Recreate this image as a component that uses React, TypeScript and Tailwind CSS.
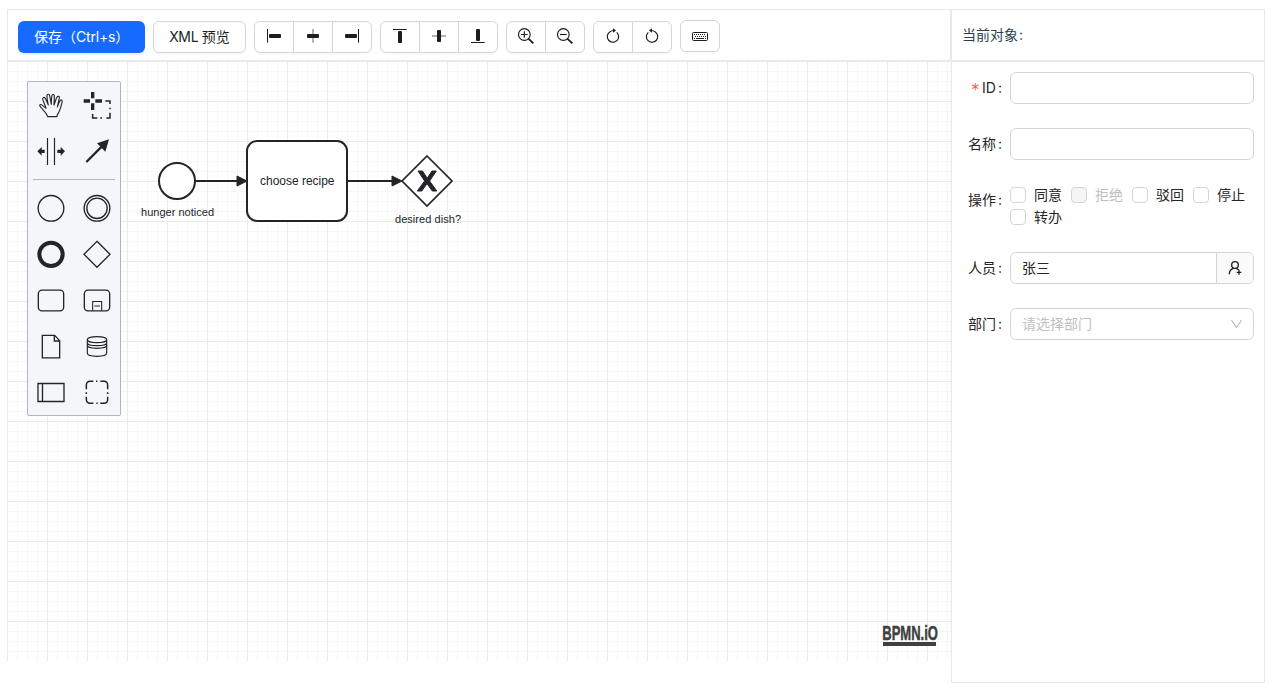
import React from "react";

const INK = "#22242a";

/* Drawings inside toolbar buttons use a grid of three units per pixel. */
function ToolButton({ children, title, className = "" }: { children: React.ReactNode; title: string; className?: string }) {
  return (
    <button aria-label={title} className={`h-8 w-10 shrink-0 border border-[#d5d5d5] bg-white shadow-[0_2px_0_rgba(0,0,0,0.02)] ${className}`}>
      <svg viewBox="0 0 120 96" className="-m-px block h-8 w-10" fill="none" stroke="#1d1d1f" strokeWidth="3">
        {children}
      </svg>
    </button>
  );
}

function Bar({ x, y, w, h }: { x: number; y: number; w: number; h: number }) {
  return <rect x={x} y={y} width={w} height={h} rx="3" fill="#1d1d1f" stroke="none" />;
}

function Toolbar() {
  return (
    <div className="flex h-[52px] items-start gap-2 border border-[#e8e8e8] pt-[11px] pl-[10px]">
      <button className="h-8 w-[127px] shrink-0 rounded-md bg-[#176aff] pl-[1px] text-left text-sm leading-8 whitespace-nowrap text-white shadow-[0_2px_0_rgba(5,145,255,0.1)]">
        <span className="pl-[15px]">保存（</span>
        <span className="tracking-[-0.2px]">Ctrl+s</span>
        <span>）</span>
      </button>
      <button className="h-8 w-[93px] shrink-0 rounded-md border border-[#d5d5d5] bg-white text-sm leading-[30px] whitespace-nowrap text-[#1f1f1f] shadow-[0_2px_0_rgba(0,0,0,0.02)]">
        <span className="tracking-[-0.35px]">XML </span>预览
      </button>
      <div className="flex">
        <ToolButton title="左对齐" className="rounded-l-md">
          <path d="M40.5 24V65" />
          <Bar x={45} y={39} w={36} h={12} />
        </ToolButton>
        <ToolButton title="水平居中" className="-ml-px">
          <path d="M60 24V65" stroke="#666" />
          <Bar x={42} y={39} w={36} h={12} />
        </ToolButton>
        <ToolButton title="右对齐" className="-ml-px rounded-r-md">
          <path d="M79.5 24V65" />
          <Bar x={39} y={39} w={36} h={12} />
        </ToolButton>
      </div>
      <div className="flex">
        <ToolButton title="顶部对齐" className="rounded-l-md">
          <path d="M39 25.5H80" />
          <Bar x={54} y={30} w={12} h={36} />
        </ToolButton>
        <ToolButton title="垂直居中" className="-ml-px">
          <path d="M39 45H81" stroke="#666" />
          <Bar x={54} y={27} w={12} h={36} />
        </ToolButton>
        <ToolButton title="底部对齐" className="-ml-px rounded-r-md">
          <path d="M39 64.5H80" />
          <Bar x={54} y={24} w={12} h={36} />
        </ToolButton>
      </div>
      <div className="flex">
        <ToolButton title="放大" className="rounded-l-md">
          <circle cx="55" cy="40.5" r="17.5" strokeWidth="3.5" />
          <path d="M45 40.5H65M55 30.5V50.5" strokeWidth="3.5" />
          <path d="M67 53L82 67" strokeWidth="5.5" />
        </ToolButton>
        <ToolButton title="缩小" className="-ml-px rounded-r-md">
          <circle cx="55" cy="40.5" r="17.5" strokeWidth="3.5" />
          <path d="M45 40.5H65" strokeWidth="3.5" />
          <path d="M67 53L82 67" strokeWidth="5.5" />
        </ToolButton>
      </div>
      <div className="flex">
        <ToolButton title="重做" className="rounded-l-md">
          <path d="M71 34A17 17 0 1 1 50 33Q56 28.500 62 28.500" strokeWidth="3.6" />
          <path d="M60 22L69 28.500L60 35Z" fill="#1d1d1f" stroke="none" />
        </ToolButton>
        <ToolButton title="撤销" className="-ml-px rounded-r-md">
          <path d="M49 34A17 17 0 1 0 70 33Q64 28.500 58 28.500" strokeWidth="3.6" />
          <path d="M60 22L51 28.500L60 35Z" fill="#1d1d1f" stroke="none" />
        </ToolButton>
      </div>
      <ToolButton title="快捷键" className="-mt-px rounded-md">
        <rect x="37.5" y="37.5" width="45" height="24" rx="3" />
        <path d="M42 43.5H78M45 49.5H78" strokeDasharray="3 3" />
        <path d="M42 55.5H45M48 55.5H72M75 55.5H78" />
      </ToolButton>
    </div>
  );
}

/* Palette glyphs: 138 units across a 46px cell. */
function Glyph({ children }: { children: React.ReactNode }) {
  return (
    <svg viewBox="0 0 138 138" className="block h-[46px] w-[46px]" fill="none" stroke={INK} strokeWidth="4">
      {children}
    </svg>
  );
}

function Palette() {
  return (
    <div className="absolute top-5 left-5 w-[94px] rounded-[2px] border border-[#b0b4c0] bg-[#f4f6f9]">
      <div className="grid grid-cols-2">
        <Glyph>
          <path
            strokeWidth="3.4"
            strokeLinejoin="round"
            d="M59 104C57 96 50 89 44 82C40 77 35 74 35 70C36 66 41 67 44 71L54 79C51 69 45 57 44 51C44 46 49 44 52 49L61 69C59 58 56 46 57 40C58 35 64 36 65 41L70 67C70 57 70 47 72 40C74 36 79 37 79 42L78 69C81 61 83 52 87 45C90 41 95 43 94 48L88 75C91 69 93 59 97 55C101 52 104 56 102 61C99 74 96 88 88 98L87 104Z"
          />
        </Glyph>
        <Glyph>
          <path strokeWidth="10" d="M56 30V49M56 64V84M29 57H48M64 57H84" />
          <path strokeWidth="4.5" d="M94 57H108V66M108 77V82M108 92V108H97M84 108H79M70 108H56V96" />
        </Glyph>
        <Glyph>
          <path d="M58.500 30V111M79.500 30V111" strokeWidth="3.5" />
          <path d="M28 70L41 57V65H50V75H41V83ZM111 70L98 57V65H88V75H98V83Z" fill={INK} stroke="none" />
        </Glyph>
        <Glyph>
          <path d="M37 102L86 53" strokeWidth="7" />
          <path d="M105 34L94 71L69 46Z" fill={INK} stroke="none" />
        </Glyph>
      </div>
      <div className="mx-[5px] my-[5px] h-px bg-[#b0b4c0]" />
      <div className="grid grid-cols-2">
        <Glyph>
          <circle cx="69" cy="70" r="38.5" />
        </Glyph>
        <Glyph>
          <circle cx="69" cy="70" r="38.5" />
          <circle cx="69" cy="70" r="30.5" />
        </Glyph>
        <Glyph>
          <circle cx="69" cy="70" r="35" strokeWidth="12" />
        </Glyph>
        <Glyph>
          <path d="M69 31L108 70L69 109L30 70Z" />
        </Glyph>
        <Glyph>
          <rect x="31" y="39.500" width="76" height="62" rx="11" />
        </Glyph>
        <Glyph>
          <rect x="31" y="39.500" width="76" height="62" rx="11" />
          <path strokeWidth="3.2" d="M56 101V73.500H83V101M61 87H78" />
        </Glyph>
        <Glyph>
          <path d="M43 37H80L95 53V104.500H43ZM79 37V54H95" />
        </Glyph>
        <Glyph>
          <ellipse cx="69" cy="50" rx="29" ry="9" strokeWidth="3.5" />
          <path strokeWidth="3.5" d="M40 50V91C40 103 98 103 98 91V50M40 59C40 71 98 71 98 59M40 67C40 79 98 79 98 67" />
        </Glyph>
        <Glyph>
          <path d="M30 43.500H108V97.500H30ZM43.500 43V97" />
        </Glyph>
        <Glyph>
          <path
            strokeWidth="4.5"
            d="M37 61V49Q37 37 49 37H58M66 37H70M79 37H90Q101 37 101 49V61M101 70V75M101 83V91Q101 103 90 103H79M71 103H67M58 103H49Q37 103 37 91V83M37 75V70"
          />
        </Glyph>
      </div>
    </div>
  );
}

function Diagram() {
  return (
    <svg viewBox="7 61 944 600" className="absolute inset-0 h-full w-full" fill="none" stroke={INK} strokeWidth="2">
      <defs>
        <pattern id="grid" x="7" y="61" width="40" height="40" patternUnits="userSpaceOnUse">
          <path d="M10.500 0V40M20.500 0V40M30.500 0V40M0 10.500H40M0 20.500H40M0 30.500H40" stroke="#f7f7f7" strokeWidth="1" />
          <path d="M0.500 0V40M0 0.500H40" stroke="#ebebeb" strokeWidth="1" />
        </pattern>
      </defs>
      <rect x="7" y="61" width="944" height="600" fill="url(#grid)" stroke="none" />
      <path d="M195 181H238M347 181H393" />
      <path d="M237 176L247 181L237 186ZM392 176L402 181L392 186Z" fill={INK} strokeWidth="1" />
      <circle cx="177" cy="181" r="18" fill="#fff" />
      <rect x="247" y="141" width="100" height="80" rx="10" fill="#fff" />
      <path d="M427 156L452 181L427 206L402 181Z" fill="#fff" strokeWidth="1.7" />
      <path d="M418 171H422.500L427.200 178.200L432 171H436.300L429.600 181L436.800 191H432.300L427 183.600L421.800 191H417.300L424.600 181Z" fill={INK} strokeWidth="1" />
      <g fill={INK} stroke="none" className="font-['Liberation_Sans',Arial,sans-serif]">
        <text x="141" y="216" fontSize="11" textLength="73" lengthAdjust="spacing">hunger noticed</text>
        <text x="260" y="185" fontSize="12" textLength="74.500" lengthAdjust="spacing">choose recipe</text>
        <text x="395" y="223" fontSize="11" textLength="66" lengthAdjust="spacing">desired dish?</text>
      </g>
      <text
        transform="translate(882.3 640) scale(0.635 1)"
        fontSize="20.5"
        fontWeight="700"
        fill="#404040"
        stroke="#404040"
        strokeWidth="0.5"
        className="font-['Liberation_Sans',Arial,sans-serif]"
      >
        BPMN.iO
      </text>
      <rect x="883" y="642" width="53" height="4" fill="#404040" stroke="none" />
    </svg>
  );
}

function Field({ label, required, children }: { label: string; required?: boolean; children: React.ReactNode }) {
  return (
    <div className="mb-6 flex items-start">
      <div className="flex h-8 w-[48px] shrink-0 items-center justify-end whitespace-nowrap">
        {required && <span className="mt-[5px] mr-[3px] font-['DejaVu_Sans',sans-serif] text-[15px] leading-none text-[#ff4d4f]">*</span>}
        <span>{label}</span>
        <span className="mr-2 ml-[2px]">:</span>
      </div>
      <div className="min-w-0 flex-1">{children}</div>
    </div>
  );
}

function Check({ label, disabled }: { label: string; disabled?: boolean }) {
  return (
    <label className="flex h-[22px] w-[61px] items-center whitespace-nowrap">
      <span className={disabled ? "h-4 w-4 rounded border border-[#d5d5d5] bg-[#f5f5f5]" : "h-4 w-4 rounded border border-[#d5d5d5] bg-white"} />
      <span className={disabled ? "ml-2 leading-[22px] text-[#bfbfbf]" : "ml-2 leading-[22px]"}>{label}</span>
    </label>
  );
}

function Properties() {
  return (
    <aside className="flex w-[314px] shrink-0 flex-col">
      <div className="h-[52px] border border-[#e8e8e8] pl-[10px] text-sm leading-[50px] text-[#2c3e50]">
        当前对象<span className="ml-[1px]">:</span>
      </div>
      <div className="h-[622px] border border-[#e8e8e8] py-[10px] pr-[10px] pl-[10px] text-sm text-[#262626]">
        <Field label="ID" required>
          <div className="h-8 rounded-md border border-[#d5d5d5]" />
        </Field>
        <Field label="名称">
          <div className="h-8 rounded-md border border-[#d5d5d5]" />
        </Field>
        <Field label="操作">
          <div className="flex w-[244px] flex-wrap">
            <Check label="同意" />
            <Check label="拒绝" disabled />
            <Check label="驳回" />
            <Check label="停止" />
            <Check label="转办" />
          </div>
        </Field>
        <Field label="人员">
          <div className="flex h-8 overflow-hidden rounded-md border border-[#d5d5d5]">
            <div className="flex-1 pl-[11px] leading-[30px]">张三</div>
            <div className="flex w-[37px] items-center justify-center border-l border-[#d5d5d5] bg-[#fafafa]">
              <svg viewBox="0 0 42 42" className="h-[14px] w-[14px]" fill="none" stroke="#1d1d1f" strokeWidth="4">
                <circle cx="21" cy="12" r="10" />
                <path d="M4 40Q4 25 17 22M25 22L33 27M26 34H40M33 27V41" />
              </svg>
            </div>
          </div>
        </Field>
        <Field label="部门">
          <div className="flex h-8 items-center justify-between rounded-md border border-[#d5d5d5] pr-[11px] pl-[11px] text-[#bfbfbf]">
            <span>请选择部门</span>
            <svg viewBox="0 0 12 12" className="h-3 w-[11px]" preserveAspectRatio="none" fill="none" stroke="#b5b5b5" strokeWidth="1.2">
              <path d="M0.500 2L6 9.500L11.500 2" />
            </svg>
          </div>
        </Field>
      </div>
    </aside>
  );
}

export default function App() {
  return (
    <div className="h-[690px] w-[1272px] overflow-hidden bg-white pt-[9px] pl-[7px] font-[Inter,'Noto_Sans_CJK_SC',sans-serif]">
      <div className="flex">
        <main className="w-[944px] shrink-0">
          <Toolbar />
          <div className="relative h-[600px] overflow-hidden">
            <Diagram />
            <Palette />
          </div>
        </main>
        <Properties />
      </div>
    </div>
  );
}
